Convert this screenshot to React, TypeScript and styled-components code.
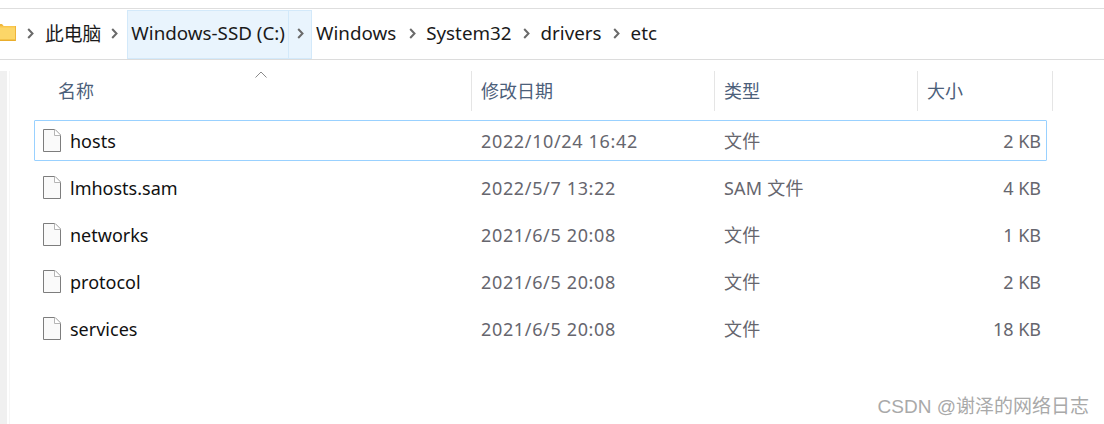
import React from "react";
import styled, {createGlobalStyle} from "styled-components";

const GlobalStyle = createGlobalStyle`
  html, body {
    margin: 0;
    padding: 0;
    background: #fff;
  }
  body {
    font-family: "Noto Sans", "Noto Sans CJK SC", sans-serif;
    overflow: hidden;
  }
`;

const Page = styled.div`
  position: relative;
  width: 1104px;
  height: 424px;
  padding-top: 8px;
  box-sizing: border-box;
  overflow: hidden;
`;

const Breadcrumb = styled.div`
  display: flex;
  align-items: stretch;
  height: 52px;
  box-sizing: border-box;
  border-top: 1px solid #dedede;
  border-bottom: 1px solid #dcdcdc;
`;

const Crumb = styled.div<{$active?: boolean; $pad?: number}>`
  display: flex;
  align-items: center;
  font-size: 18.8px;
  color: #1a1a1a;
  box-sizing: border-box;
  padding: 0 ${p => p.$pad ?? 0}px 4px;
  background: ${p => p.$active ? "#e9f4fd" : "transparent"};
  border: 1px solid ${p => p.$active ? "#d3e9fa" : "transparent"};
  margin-top: 1px;
`;

const Sep = styled.div<{$active?: boolean; $w: number}>`
  display: flex;
  align-items: center;
  justify-content: center;
  flex: none;
  width: ${p => p.$w}px;
  box-sizing: border-box;
  margin-top: 1px;
  padding-bottom: 2px;
  background: ${p => p.$active ? "#e9f4fd" : "transparent"};
  border: 1px solid ${p => p.$active ? "#d3e9fa" : "transparent"};
  border-left-width: ${p => p.$active ? 0 : 1}px;
`;

const FolderSlot = styled.div`
  display: flex;
  align-items: center;
  flex: none;
  width: 16px;
  padding-bottom: 3px;
`;

const Body = styled.div`
  display: flex;
  height: 364px;
  padding-top: 11px;
  box-sizing: border-box;
`;

const LeftEdge = styled.div`
  width: 7px;
  background: #f0f0f0;
  margin-right: 2px;
  flex: none;
`;

const LeftEdgeLine = styled.div`
  width: 1px;
  background: #f6f6f6;
  flex: none;
`;

const ListArea = styled.div`
  position: relative;
  flex: 1;
`;

const HeaderRow = styled.div`
  display: grid;
  grid-template-columns: 438px 243px 203px 135px;
  height: 40px;
  margin-left: 24px;
  margin-bottom: 9px;
`;

const HeaderCell = styled.div<{$first?: boolean}>`
  display: flex;
  align-items: center;
  height: 40px;
  box-sizing: border-box;
  padding-left: ${p => p.$first ? 24 : 9}px;
  padding-bottom: 2px;
  border-right: 1px solid #e5e5e5;
  font-size: 18px;
  color: #4c607a;
`;

const SortCaret = styled.svg`
  position: absolute;
  left: 245px;
  top: 0;
  width: 12px;
  height: 7px;
`;

const Rows = styled.div`
  display: flex;
  flex-direction: column;
  gap: 6px;
  margin-left: 24px;
  width: 1013px;
`;

const Row = styled.div<{$selected?: boolean}>`
  display: grid;
  grid-template-columns: 437px 243px 203px 1fr;
  height: 41px;
  box-sizing: border-box;
  align-items: center;
  border: 1px solid ${p => p.$selected ? "#99d1ff" : "transparent"};
  border-radius: 1px;
  font-size: 18px;
`;

const NameCell = styled.div`
  display: flex;
  align-items: center;
  gap: 9px;
  padding-left: 8px;
  color: #111;
`;

const DateCell = styled.div`
  color: #66666e;
  padding-left: 9px;
  letter-spacing: 0.65px;
`;

const TypeCell = styled.div`
  color: #66666e;
  padding-left: 9px;
  padding-bottom: 2px;
  letter-spacing: 0.2px;
`;

const SizeCell = styled.div`
  color: #66666e;
  padding-right: 5px;
  text-align: right;
`;

const Watermark = styled.div`
  position: absolute;
  right: 15px;
  bottom: 6px;
  font-family: "Liberation Sans", "Noto Sans CJK SC", sans-serif;
  font-size: 19px;
  color: #a9a9a9;
  white-space: nowrap;
`;

const Chevron = () => (
    <svg width="7" height="11" viewBox="0 0 7 11">
        <path d="M1.2 1 L5.5 5.5 L1.2 10" fill="none" stroke="#6a6a6a" strokeWidth="2"/>
    </svg>
);

const FileIcon = () => (
    <svg width="18" height="23" viewBox="0 0 18 23">
        <path d="M.5.5 H12 L17.5 6 V22.5 H.5 Z" fill="#fafafa" stroke="#7d7d7d"/>
        <path d="M11.5.5 V6.5 H17.5" fill="#fff" stroke="#b5b5b5"/>
    </svg>
);

const FolderIcon = () => (
    <svg width="16" height="17" viewBox="0 0 16 17" style={{display: "block"}}>
        <path d="M0 0 H2 L4 2.5 H0 Z" fill="#f0b83c"/>
        <rect x="0" y="2" width="16" height="15" fill="#fcd668"/>
        <rect x="0" y="2" width="16" height="1.5" fill="#f9c64c"/>
        <rect x="0" y="15.5" width="16" height="1.5" fill="#e9ad2c"/>
        <rect x="15" y="2" width="1" height="15" fill="#eeb43a"/>
    </svg>
);

const files = [
    {name: "hosts", date: "2022/10/24 16:42", type: "文件", size: "2 KB", selected: true},
    {name: "lmhosts.sam", date: "2022/5/7 13:22", type: "SAM 文件", size: "4 KB"},
    {name: "networks", date: "2021/6/5 20:08", type: "文件", size: "1 KB"},
    {name: "protocol", date: "2021/6/5 20:08", type: "文件", size: "2 KB"},
    {name: "services", date: "2021/6/5 20:08", type: "文件", size: "18 KB"},
];

export default function App() {
    return (
        <Page>
            <GlobalStyle/>
            <Breadcrumb>
                <FolderSlot><FolderIcon/></FolderSlot>
                <Sep $w={28}><Chevron/></Sep>
                <Crumb>此电脑</Crumb>
                <Sep $w={25}><Chevron/></Sep>
                <Crumb $active $pad={3}>Windows-SSD (C:)</Crumb>
                <Sep $active $w={23}><Chevron/></Sep>
                <Crumb $pad={3}>Windows</Crumb>
                <Sep $w={25}><Chevron/></Sep>
                <Crumb>System32</Crumb>
                <Sep $w={27}><Chevron/></Sep>
                <Crumb>drivers</Crumb>
                <Sep $w={27}><Chevron/></Sep>
                <Crumb>etc</Crumb>
            </Breadcrumb>
            <Body>
                <LeftEdge/>
                <LeftEdgeLine/>
                <ListArea>
                    <SortCaret viewBox="0 0 12 7">
                        <path d="M.5 6.5 L6 1 L11.5 6.5" fill="none" stroke="#8a8a8a"/>
                    </SortCaret>
                    <HeaderRow>
                        <HeaderCell $first>名称</HeaderCell>
                        <HeaderCell>修改日期</HeaderCell>
                        <HeaderCell>类型</HeaderCell>
                        <HeaderCell>大小</HeaderCell>
                    </HeaderRow>
                    <Rows>
                        {files.map(f => (
                            <Row key={f.name} $selected={f.selected}>
                                <NameCell><FileIcon/>{f.name}</NameCell>
                                <DateCell>{f.date}</DateCell>
                                <TypeCell>{f.type}</TypeCell>
                                <SizeCell>{f.size}</SizeCell>
                            </Row>
                        ))}
                    </Rows>
                </ListArea>
            </Body>
            <Watermark>CSDN @谢泽的网络日志</Watermark>
        </Page>
    );
}
